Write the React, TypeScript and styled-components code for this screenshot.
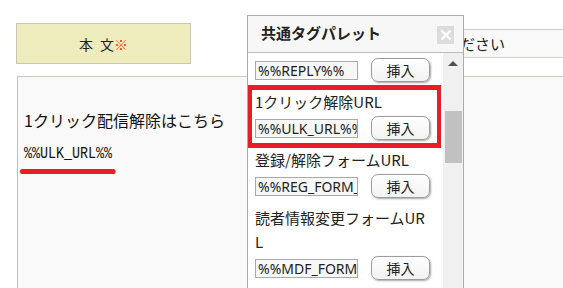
import React, { useLayoutEffect, useRef } from 'react'
import styled, { createGlobalStyle } from 'styled-components'

const GlobalStyle = createGlobalStyle`
    *, *::before, *::after {
        box-sizing: border-box;
    }
    html, body {
        margin: 0;
        padding: 0;
        background: #ffffff;
    }
    body {
        font-family: "Noto Sans CJK JP", "Noto Sans", sans-serif;
        color: #222;
    }
`

interface PaletteTag {
    id: string
    title: string
    tag: string
    highlighted?: boolean
}

const tags: PaletteTag[] = [
    { id: 'reply', title: '返信フォームURL', tag: '%%REPLY%%' },
    { id: 'ulk', title: '1クリック解除URL', tag: '%%ULK_URL%%', highlighted: true },
    { id: 'reg', title: '登録/解除フォームURL', tag: '%%REG_FORM_URL%%' },
    { id: 'mdf', title: '読者情報変更フォームUR\nL', tag: '%%MDF_FORM_URL%%' },
    { id: 'bn', title: 'バックナンバーURL', tag: '%%BN_URL%%' },
]

const App = () => {
    const listRef = useRef<HTMLDivElement>(null)

    // the palette list is shown scrolled a little
    useLayoutEffect(() => {
        if (listRef.current) listRef.current.scrollTop = 25
    }, [])

    return (
        <>
            <GlobalStyle />
            <Page>
                <TopRow>
                    <LabelBox>
                        本{'\u2002'}文<Required>※</Required>
                    </LabelBox>
                    <SubjectField>差出人名を入力してください</SubjectField>
                </TopRow>
                <BodyArea>
                    <BodyLine>1クリック配信解除はこちら</BodyLine>
                    <BodyLine>
                        <TagMark>%%ULK_URL%%</TagMark>
                    </BodyLine>
                </BodyArea>

                <Palette>
                    <PaletteHeader>
                        <PaletteTitle>共通タグパレット</PaletteTitle>
                        <CloseButton aria-label="閉じる">
                            <svg width="12" height="12" viewBox="0 0 12 12">
                                <path d="M1.5 1.5 L10.5 10.5 M10.5 1.5 L1.5 10.5" stroke="#fff" strokeWidth="2.4" />
                            </svg>
                        </CloseButton>
                    </PaletteHeader>
                    <PaletteBody>
                        <ListViewport ref={listRef}>
                            {tags.map((item) => (
                                <Item key={item.id} highlighted={!!item.highlighted}>
                                    <ItemLabel>{item.title}</ItemLabel>
                                    <ItemRow>
                                        <TagField>{item.tag}</TagField>
                                        <InsertButton>挿入</InsertButton>
                                    </ItemRow>
                                </Item>
                            ))}
                        </ListViewport>
                        <Scrollbar>
                            <ScrollArrow />
                            <ScrollThumb />
                        </Scrollbar>
                    </PaletteBody>
                </Palette>
            </Page>
        </>
    )
}

const Page = styled.div`
    position: relative;
    width: 563px;
    height: 288px;
    overflow: hidden;
    padding: 23px 0 0 16px;
    display: flex;
    flex-direction: column;
`

const TopRow = styled.div`
    display: flex;
    align-items: center;
    gap: 60px;
    height: 41px;
`

const LabelBox = styled.div`
    width: 175px;
    height: 41px;
    border: 1px solid #c9c6b1;
    background: #eeecbd;
    display: flex;
    align-items: center;
    justify-content: center;
    font-size: 14px;
    color: #222;
`

const Required = styled.span`
    color: #f03c1e;
`

const SubjectField = styled.div`
    flex: 1;
    height: 29px;
    border: 1px solid #cfcdc3;
    border-right: none;
    background: #f9f9f9;
    padding-left: 59px;
    font-size: 15px;
    line-height: 27px;
    white-space: nowrap;
    overflow: hidden;
    color: #222;
`

const BodyArea = styled.div`
    flex: 1;
    margin: 12px 0 0 1px;
    border-top: 1px solid #cbc8b8;
    border-left: 1px solid #c3c0ad;
    background: #f9f9f9;
    padding: 28px 0 0 6px;
`

const BodyLine = styled.div`
    font-size: 16px;
    line-height: 31px;
    height: 31px;
    color: #111;
    white-space: nowrap;
`

const TagMark = styled.span`
    position: relative;
    display: inline-block;
    font-family: "Liberation Mono", monospace;
    font-size: 16px;
    transform: scaleX(0.833);
    transform-origin: left center;

    &::after {
        content: '';
        position: absolute;
        left: -5px;
        right: -4px;
        bottom: -4px;
        height: 5px;
        border-radius: 3px;
        background: #e61e28;
    }
`

const Palette = styled.div`
    position: absolute;
    left: 247px;
    top: 15px;
    width: 217px;
    height: 300px;
    border: 1px solid #ababab;
    background: #fff;
    display: flex;
    flex-direction: column;
`

const PaletteHeader = styled.div`
    height: 37px;
    flex-shrink: 0;
    background: #f7f7f7;
    border-bottom: 1px solid #bcbcbc;
    display: flex;
    align-items: flex-start;
    justify-content: space-between;
    padding: 8px 9px 0 13px;
`

const PaletteTitle = styled.div`
    font-size: 15px;
    line-height: 17px;
    font-weight: 700;
    color: #222;
`

const CloseButton = styled.div`
    margin-top: 2px;
    width: 17px;
    height: 18px;
    background: #dcdcdc;
    display: flex;
    align-items: center;
    justify-content: center;
`

const PaletteBody = styled.div`
    flex: 1;
    min-height: 0;
    display: flex;
`

const ListViewport = styled.div`
    flex: 1;
    overflow-y: scroll;
    scrollbar-width: none;

    &::-webkit-scrollbar {
        display: none;
    }
`

const Item = styled.div<{ highlighted: boolean }>`
    position: relative;
    padding: 4px 0 4px 7px;

    &::after {
        content: '';
        display: ${({ highlighted }) => (highlighted ? 'block' : 'none')};
        position: absolute;
        top: -1px;
        bottom: -4px;
        left: 0;
        right: 2px;
        border-style: solid;
        border-color: #e61e28;
        border-width: 5px 4px;
        pointer-events: none;
    }
`

const ItemLabel = styled.div`
    font-size: 15px;
    line-height: 24px;
    color: #222;
    white-space: pre-line;
`

const ItemRow = styled.div`
    display: flex;
    align-items: center;
    height: 24px;
    margin-top: 2px;
`

const TagField = styled.div`
    width: 103px;
    height: 19px;
    border: 1px solid #a9a9a9;
    background: #f7f7f7;
    padding-left: 2px;
    font-family: "Noto Sans", sans-serif;
    font-size: 14px;
    line-height: 17px;
    white-space: nowrap;
    overflow: hidden;
    color: #222;
`

const InsertButton = styled.div`
    margin-left: 13px;
    width: 59px;
    height: 24px;
    border: 1px solid #9c9c9c;
    border-radius: 7px;
    background: linear-gradient(#ffffff, #f2f2f2);
    box-shadow: 1px 1px 2px rgba(0, 0, 0, 0.35);
    display: flex;
    align-items: center;
    justify-content: center;
    font-size: 14px;
    color: #222;
`

const Scrollbar = styled.div`
    width: 20px;
    flex-shrink: 0;
    background: #f0f0f0;
    display: flex;
    flex-direction: column;
`

const ScrollArrow = styled.div`
    height: 20px;
    display: flex;
    align-items: center;
    justify-content: center;

    &::before {
        content: '';
        border-left: 5px solid transparent;
        border-right: 5px solid transparent;
        border-bottom: 5px solid #505050;
    }
`

const ScrollThumb = styled.div`
    height: 52px;
    margin: 38px 1px 0 2px;
    background: #c1c1c1;
`

export default App
